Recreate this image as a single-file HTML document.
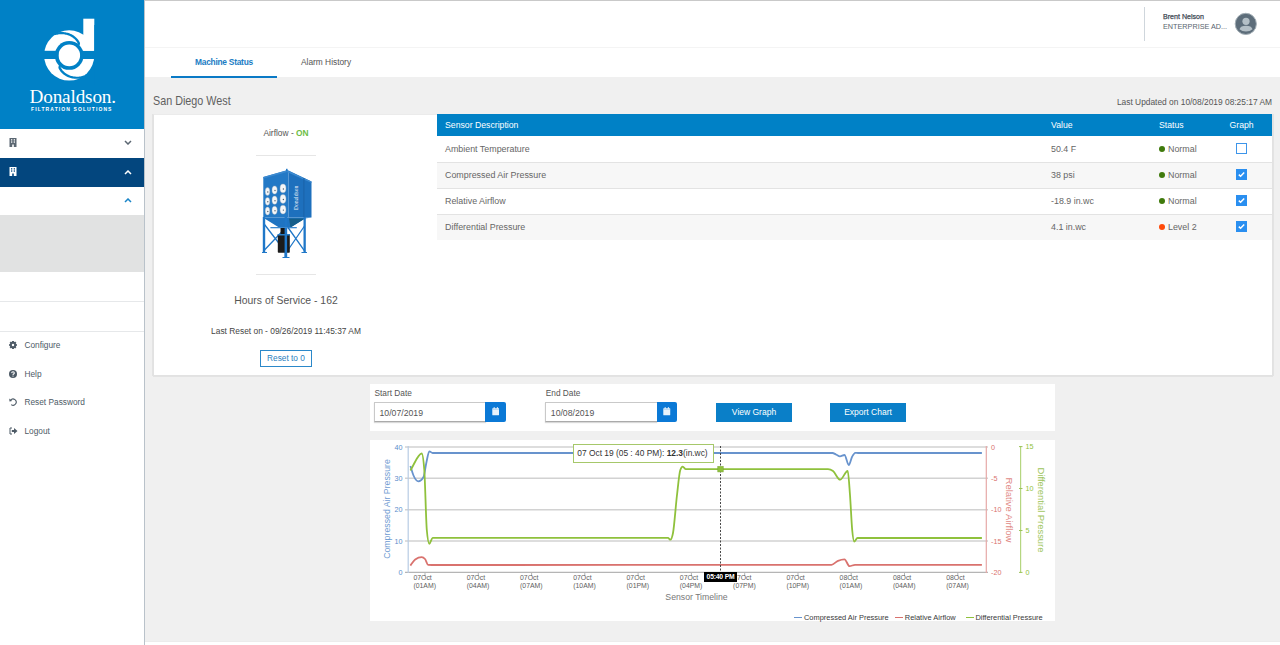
<!DOCTYPE html>
<html><head><meta charset="utf-8"><title>Machine Status</title>
<style>
*{margin:0;padding:0;box-sizing:border-box}
html,body{width:1280px;height:645px;overflow:hidden;background:#f0f0f0;font-family:"Liberation Sans",sans-serif}
.a{position:absolute}
.t{font-family:"Liberation Sans",sans-serif}
.c{font-family:"Liberation Sans",sans-serif}
</style></head><body>
<div class="a t" style="left:153px;top:93.5px;font-size:12.2px;color:#5f5f5f;line-height:14px;transform:scaleX(0.885);transform-origin:0 0;white-space:nowrap">San Diego West</div>
<div class="a t" style="right:8px;top:97px;font-size:8.4px;color:#555;line-height:10px;white-space:nowrap;text-align:right">Last Updated on 10/08/2019 08:25:17 AM</div>
<div class="a" style="left:153px;top:114px;width:1120px;height:262px;background:#fff;border:1px solid #e2e2e2;border-top-color:#ebebeb;box-shadow:0 0.6px 0.6px rgba(0,0,0,0.05),-0.6px 0 0.6px rgba(0,0,0,0.05),0.6px 0 0.6px rgba(0,0,0,0.05)"></div>
<div class="a t" style="left:186px;top:128px;width:200px;text-align:center;font-size:8.4px;color:#555;line-height:10px">Airflow - <b style="color:#6cbd45">ON</b></div>
<div class="a" style="left:256px;top:155px;width:60px;height:1px;background:#e6e6e6"></div>
<div class="a" style="left:256px;top:274px;width:60px;height:1px;background:#e6e6e6"></div>
<svg class="a" style="left:255px;top:165px" width="62" height="98" viewBox="255 165 62 98">
<path d="M288.5 170.6 L311.5 181.4 L311.5 217.5 L288.5 217.5 Z" fill="#1e70bd"/>
<path d="M263.3 177 L287 170.3 L288.5 170.6 L288.5 217.5 L263.3 217.5 Z" fill="#2379c6"/>
<path d="M263.3 177 L287 170.3 L311.5 181.4 L311.5 183 L287 172 L263.3 178.6 Z" fill="#3d8ad0"/>
<rect x="286" y="168.8" width="1.6" height="2.5" fill="#2379c6"/>
<rect x="303.3" y="178" width="1.2" height="39" fill="#1a64ab"/>
<path d="M263.3 217.5 L311.5 217.5 L305 218.5 L290.5 227.5 L279 227.5 L264.5 218.5 Z" fill="#1f74c2"/>
<path d="M289 218.5 L305 218.5 L290.5 227.5 Z" fill="#155e8a"/>
<rect x="262.8" y="217" width="2.4" height="35.5" fill="#1f77c8"/>
<rect x="284.6" y="217" width="2.5" height="40.5" fill="#1f77c8"/>
<rect x="303.5" y="217" width="2.3" height="35.5" fill="#1f77c8"/>
<path d="M262 252.5 H267 M282.5 257.5 H289.5 M301.5 252.5 H307" stroke="#1f77c8" stroke-width="1.2"/>
<rect x="270.4" y="227" width="26.4" height="1.3" fill="#3d8ad0"/>
<path d="M264.5 224.5 L284.5 250.5 M284.5 229 L264 250.5 M288 227.5 L304.5 250.8 M304.5 226 L288 250" stroke="#1f77c8" stroke-width="1.3"/>
<rect x="280.5" y="228" width="4.5" height="7" fill="#151515"/>
<rect x="277.8" y="234.5" width="12" height="18.3" rx="0.8" fill="#1b1b1b"/>
<rect x="277.5" y="234" width="12.5" height="1.5" fill="#2a7fc9"/>
<rect x="284.6" y="228" width="2.5" height="30" fill="#1f77c8"/>
<g fill="#f4f6f8" stroke="#9aa7b3" stroke-width="0.4">
<ellipse cx="267.5" cy="191.5" rx="2.3" ry="3.9"/><ellipse cx="274.6" cy="190" rx="2.6" ry="4.1"/><ellipse cx="283" cy="188.4" rx="3" ry="4.4"/>
<ellipse cx="267.5" cy="201.3" rx="2.3" ry="3.9"/><ellipse cx="274.6" cy="200.2" rx="2.6" ry="4.1"/><ellipse cx="283" cy="199" rx="3" ry="4.4"/>
<ellipse cx="267.5" cy="211" rx="2.3" ry="3.9"/><ellipse cx="274.6" cy="210.3" rx="2.6" ry="4.1"/><ellipse cx="283" cy="209.6" rx="3" ry="4.4"/>
</g>
<g fill="#55606a">
<circle cx="267.8" cy="192" r="0.7"/><circle cx="275" cy="190.5" r="0.7"/><circle cx="283.4" cy="189" r="0.7"/>
<circle cx="267.8" cy="201.8" r="0.7"/><circle cx="275" cy="200.7" r="0.7"/><circle cx="283.4" cy="199.5" r="0.7"/>
<circle cx="267.8" cy="211.5" r="0.7"/><circle cx="275" cy="210.8" r="0.7"/><circle cx="283.4" cy="210.1" r="0.7"/>
</g>
<text x="0" y="0" transform="translate(297.6 210) rotate(-90)" font-family="Liberation Serif" font-size="5.6" fill="#e8f0f8">Donaldson</text>
</svg>
<div class="a t" style="left:186px;top:294px;width:200px;text-align:center;font-size:10.4px;color:#555;line-height:13px">Hours of Service - 162</div>
<div class="a t" style="left:136px;top:326.3px;width:300px;text-align:center;font-size:8.4px;color:#444;line-height:10px">Last Reset on - 09/26/2019 11:45:37 AM</div>
<div class="a t" style="left:260px;top:350px;width:52px;height:17px;border:1px solid #2b88c9;text-align:center;font-size:8.3px;color:#2b7fc0;line-height:15px">Reset to 0</div>
<div class="a" style="left:437px;top:114px;width:835px;height:22px;background:#0081c6"></div>
<div class="a t" style="left:445px;top:120px;font-size:8.7px;color:#fff;line-height:10px;white-space:nowrap">Sensor Description</div>
<div class="a t" style="left:1051px;top:120px;font-size:8.7px;color:#fff;line-height:10px;white-space:nowrap">Value</div>
<div class="a t" style="left:1159px;top:120px;font-size:8.7px;color:#fff;line-height:10px;white-space:nowrap">Status</div>
<div class="a t" style="left:1229.5px;top:120px;font-size:8.7px;color:#fff;line-height:10px;white-space:nowrap">Graph</div>
<div class="a" style="left:437px;top:136px;width:835px;height:26px;background:#fff"></div>
<div class="a t" style="left:445px;top:143.5px;font-size:8.9px;color:#666;line-height:10px;white-space:nowrap">Ambient Temperature</div>
<div class="a t" style="left:1051px;top:143.5px;font-size:8.9px;color:#666;line-height:10px;white-space:nowrap">50.4 F</div>
<div class="a" style="left:1158.5px;top:146px;width:6px;height:6px;border-radius:50%;background:#3f7a0c"></div>
<div class="a t" style="left:1168px;top:143.5px;font-size:8.9px;color:#666;line-height:10px;white-space:nowrap">Normal</div>
<div class="a" style="left:1236px;top:143px;width:11px;height:11px;border:1px solid #3d95ea;background:#fff"></div>
<div class="a" style="left:437px;top:162px;width:835px;height:26px;background:#f7f7f7"></div>
<div class="a" style="left:437px;top:162px;width:835px;height:1px;background:#e3e3e3"></div>
<div class="a t" style="left:445px;top:169.5px;font-size:8.9px;color:#666;line-height:10px;white-space:nowrap">Compressed Air Pressure</div>
<div class="a t" style="left:1051px;top:169.5px;font-size:8.9px;color:#666;line-height:10px;white-space:nowrap">38 psi</div>
<div class="a" style="left:1158.5px;top:172px;width:6px;height:6px;border-radius:50%;background:#3f7a0c"></div>
<div class="a t" style="left:1168px;top:169.5px;font-size:8.9px;color:#666;line-height:10px;white-space:nowrap">Normal</div>
<svg class="a" style="left:1236px;top:169px" width="11" height="11" viewBox="0 0 11 11"><rect x="0" y="0" width="11" height="11" fill="#2a8ff0"/><path d="M2.8 5.6 L4.6 7.3 L8.2 3.6" stroke="#fff" stroke-width="1.5" fill="none"/></svg>
<div class="a" style="left:437px;top:188px;width:835px;height:26px;background:#fff"></div>
<div class="a" style="left:437px;top:188px;width:835px;height:1px;background:#e3e3e3"></div>
<div class="a t" style="left:445px;top:195.5px;font-size:8.9px;color:#666;line-height:10px;white-space:nowrap">Relative Airflow</div>
<div class="a t" style="left:1051px;top:195.5px;font-size:8.9px;color:#666;line-height:10px;white-space:nowrap">-18.9 in.wc</div>
<div class="a" style="left:1158.5px;top:198px;width:6px;height:6px;border-radius:50%;background:#3f7a0c"></div>
<div class="a t" style="left:1168px;top:195.5px;font-size:8.9px;color:#666;line-height:10px;white-space:nowrap">Normal</div>
<svg class="a" style="left:1236px;top:195px" width="11" height="11" viewBox="0 0 11 11"><rect x="0" y="0" width="11" height="11" fill="#2a8ff0"/><path d="M2.8 5.6 L4.6 7.3 L8.2 3.6" stroke="#fff" stroke-width="1.5" fill="none"/></svg>
<div class="a" style="left:437px;top:214px;width:835px;height:26px;background:#f7f7f7"></div>
<div class="a" style="left:437px;top:214px;width:835px;height:1px;background:#e3e3e3"></div>
<div class="a t" style="left:445px;top:221.5px;font-size:8.9px;color:#666;line-height:10px;white-space:nowrap">Differential Pressure</div>
<div class="a t" style="left:1051px;top:221.5px;font-size:8.9px;color:#666;line-height:10px;white-space:nowrap">4.1 in.wc</div>
<div class="a" style="left:1158.5px;top:224px;width:6px;height:6px;border-radius:50%;background:#ff4a0a"></div>
<div class="a t" style="left:1168px;top:221.5px;font-size:8.9px;color:#666;line-height:10px;white-space:nowrap">Level 2</div>
<svg class="a" style="left:1236px;top:221px" width="11" height="11" viewBox="0 0 11 11"><rect x="0" y="0" width="11" height="11" fill="#2a8ff0"/><path d="M2.8 5.6 L4.6 7.3 L8.2 3.6" stroke="#fff" stroke-width="1.5" fill="none"/></svg>
<div class="a" style="left:370px;top:384px;width:685px;height:47px;background:#fff"></div>
<div class="a t" style="left:374.5px;top:387.5px;font-size:8.3px;color:#555;line-height:10px;white-space:nowrap">Start Date</div>
<div class="a" style="left:373.7px;top:402px;width:112px;height:20px;border:1px solid #c9c9c9;border-right:0;border-bottom-color:#aaa;box-shadow:0 1px 1px rgba(0,0,0,0.15);background:#fff"></div>
<div class="a t" style="left:379.5px;top:407.5px;font-size:8.7px;color:#555;line-height:10px;white-space:nowrap">10/07/2019</div>
<div class="a" style="left:485.2px;top:402px;width:20.5px;height:20px;background:#0b79d6;border-radius:0 2px 2px 0"></div>
<svg class="a" style="left:491.8px;top:407.3px" width="7.5" height="8.5" viewBox="0 0 8 9"><rect x="0.3" y="1.2" width="7.4" height="7.5" rx="0.6" fill="#eaf3fb"/><rect x="1.8" y="0" width="1" height="2" fill="#eaf3fb"/><rect x="5.2" y="0" width="1" height="2" fill="#eaf3fb"/><rect x="0.3" y="2.6" width="7.4" height="0.5" fill="#8cc0ea"/></svg>
<div class="a t" style="left:545.8px;top:387.5px;font-size:8.3px;color:#555;line-height:10px;white-space:nowrap">End Date</div>
<div class="a" style="left:545.0px;top:402px;width:112px;height:20px;border:1px solid #c9c9c9;border-right:0;border-bottom-color:#aaa;box-shadow:0 1px 1px rgba(0,0,0,0.15);background:#fff"></div>
<div class="a t" style="left:550.8px;top:407.5px;font-size:8.7px;color:#555;line-height:10px;white-space:nowrap">10/08/2019</div>
<div class="a" style="left:656.5px;top:402px;width:20.5px;height:20px;background:#0b79d6;border-radius:0 2px 2px 0"></div>
<svg class="a" style="left:663.1px;top:407.3px" width="7.5" height="8.5" viewBox="0 0 8 9"><rect x="0.3" y="1.2" width="7.4" height="7.5" rx="0.6" fill="#eaf3fb"/><rect x="1.8" y="0" width="1" height="2" fill="#eaf3fb"/><rect x="5.2" y="0" width="1" height="2" fill="#eaf3fb"/><rect x="0.3" y="2.6" width="7.4" height="0.5" fill="#8cc0ea"/></svg>
<div class="a t" style="left:716px;top:403px;width:76px;height:18.5px;background:#0a7fc8;color:#fff;text-align:center;font-size:8.5px;line-height:18px;white-space:nowrap">View Graph</div>
<div class="a t" style="left:830px;top:403px;width:76px;height:18.5px;background:#0a7fc8;color:#fff;text-align:center;font-size:8.5px;line-height:18px;white-space:nowrap">Export Chart</div>
<div class="a" style="left:370px;top:440px;width:685px;height:181px;background:#fff"></div>
<svg class="a" style="left:370px;top:440px" width="685" height="181" viewBox="370 440 685 181">
<line x1="405" y1="447.0" x2="988" y2="447.0" stroke="#d2d2d2" stroke-width="1.4"/>
<line x1="405" y1="478.3" x2="988" y2="478.3" stroke="#d2d2d2" stroke-width="1.4"/>
<line x1="405" y1="509.8" x2="988" y2="509.8" stroke="#d2d2d2" stroke-width="1.4"/>
<line x1="405" y1="541.0" x2="988" y2="541.0" stroke="#d2d2d2" stroke-width="1.4"/>
<line x1="405" y1="572.4" x2="988" y2="572.4" stroke="#b5b5b5" stroke-width="1.4"/>
<line x1="408.2" y1="446" x2="408.2" y2="573" stroke="#b8cce4" stroke-width="1.2"/>
<line x1="986.3" y1="446" x2="986.3" y2="573" stroke="#e6a9a7" stroke-width="1.2"/>
<line x1="1020.6" y1="446" x2="1020.6" y2="573" stroke="#b5d680" stroke-width="1.2"/>
<line x1="1019" y1="446.6" x2="1022.5" y2="446.6" stroke="#9cc45a" stroke-width="1"/>
<line x1="1019" y1="488.5" x2="1022.5" y2="488.5" stroke="#9cc45a" stroke-width="1"/>
<line x1="1019" y1="530.5" x2="1022.5" y2="530.5" stroke="#9cc45a" stroke-width="1"/>
<line x1="1019" y1="572.4" x2="1022.5" y2="572.4" stroke="#9cc45a" stroke-width="1"/>
<line x1="425.0" y1="572.4" x2="425.0" y2="576" stroke="#b5b5b5" stroke-width="1"/>
<line x1="478.3" y1="572.4" x2="478.3" y2="576" stroke="#b5b5b5" stroke-width="1"/>
<line x1="531.6" y1="572.4" x2="531.6" y2="576" stroke="#b5b5b5" stroke-width="1"/>
<line x1="584.8" y1="572.4" x2="584.8" y2="576" stroke="#b5b5b5" stroke-width="1"/>
<line x1="638.1" y1="572.4" x2="638.1" y2="576" stroke="#b5b5b5" stroke-width="1"/>
<line x1="691.4" y1="572.4" x2="691.4" y2="576" stroke="#b5b5b5" stroke-width="1"/>
<line x1="744.7" y1="572.4" x2="744.7" y2="576" stroke="#b5b5b5" stroke-width="1"/>
<line x1="798.0" y1="572.4" x2="798.0" y2="576" stroke="#b5b5b5" stroke-width="1"/>
<line x1="851.2" y1="572.4" x2="851.2" y2="576" stroke="#b5b5b5" stroke-width="1"/>
<line x1="904.5" y1="572.4" x2="904.5" y2="576" stroke="#b5b5b5" stroke-width="1"/>
<line x1="957.8" y1="572.4" x2="957.8" y2="576" stroke="#b5b5b5" stroke-width="1"/>
<path d="M410.40 565.60 C412.00 563.57 413.60 560.63 415.20 559.50 C417.37 557.97 419.53 557.20 421.70 557.20 C422.80 557.20 423.90 557.80 425.00 559.00 C426.07 560.16 427.13 564.84 428.20 564.90 C429.47 564.97 430.73 565.00 432.00 565.00 C565.17 565.00 698.33 564.93 831.50 564.80 C833.67 564.80 835.83 561.72 838.00 560.80 C840.17 559.88 842.33 559.30 844.50 559.30 C846.17 559.30 847.83 566.20 849.50 566.20 C851.33 566.20 853.17 564.80 855.00 564.80 C897.30 564.80 939.60 564.80 981.90 564.80" stroke="#d9726e" stroke-width="1.8" fill="none" stroke-linejoin="round"/>
<path d="M410.40 466.00 C411.43 469.17 412.47 473.10 413.50 475.50 C415.17 479.37 416.83 481.30 418.50 481.30 C420.17 481.30 421.83 479.87 423.50 477.00 C424.50 475.28 425.50 466.39 426.50 462.00 C427.43 457.90 428.37 451.30 429.30 451.30 C430.40 451.30 431.50 453.00 432.60 453.00 C433.73 453.00 434.87 453.00 436.00 453.00 C568.17 453.00 700.33 453.00 832.50 453.00 C833.67 453.00 834.83 453.99 836.00 454.50 C837.33 455.08 838.67 456.30 840.00 456.30 C841.50 456.30 843.00 455.00 844.50 455.00 C845.93 455.00 847.37 465.00 848.80 465.00 C849.87 465.00 850.93 459.02 852.00 457.00 C853.10 454.91 854.20 452.80 855.30 452.80 C856.20 452.80 857.10 453.00 858.00 453.00 C899.30 453.00 940.60 453.00 981.90 453.00" stroke="#6893cd" stroke-width="1.8" fill="none" stroke-linejoin="round"/>
<path d="M410.40 470.40 C414.17 464.77 417.93 453.50 421.70 453.50 C422.57 453.50 423.43 459.00 424.30 470.00 C425.13 480.58 425.97 520.80 426.80 530.00 C427.63 539.20 428.47 543.80 429.30 543.80 C430.40 543.80 431.50 537.90 432.60 537.90 C433.73 537.90 434.87 537.90 436.00 537.90 C513.33 537.90 590.67 537.90 668.00 537.90 C668.80 537.90 669.60 539.70 670.40 539.70 C671.27 539.70 672.13 537.47 673.00 533.00 C674.33 526.13 675.67 506.26 677.00 495.00 C678.10 485.71 679.20 473.12 680.30 470.00 C681.10 467.73 681.90 466.60 682.70 466.60 C683.73 466.60 684.77 469.20 685.80 469.20 C686.87 469.20 687.93 469.20 689.00 469.20 C735.33 469.20 781.67 469.20 828.00 469.20 C829.67 469.20 831.33 469.80 833.00 471.00 C835.37 472.70 837.73 479.70 840.10 479.70 C842.63 479.70 845.17 471.00 847.70 471.00 C848.47 471.00 849.23 484.85 850.00 495.00 C850.73 504.70 851.47 522.24 852.20 530.00 C852.87 537.06 853.53 541.50 854.20 541.50 C855.30 541.50 856.40 538.00 857.50 538.00 C858.67 538.00 859.83 538.00 861.00 538.00 C901.30 538.00 941.60 538.00 981.90 538.00" stroke="#8fc13c" stroke-width="1.8" fill="none" stroke-linejoin="round"/>
<line x1="720.5" y1="446" x2="720.5" y2="572" stroke="#333" stroke-width="0.9" stroke-dasharray="2,1.5"/>
<rect x="717.8" y="466.5" width="5.4" height="5.4" fill="#8fc13c" stroke="#7ba832" stroke-width="0.6"/>
</svg>
<div class="a c" style="left:372px;top:442.5px;width:30.5px;text-align:right;font-size:7.2px;color:#5b8ccb;line-height:9px">40</div>
<div class="a c" style="left:372px;top:473.8px;width:30.5px;text-align:right;font-size:7.2px;color:#5b8ccb;line-height:9px">30</div>
<div class="a c" style="left:372px;top:505.3px;width:30.5px;text-align:right;font-size:7.2px;color:#5b8ccb;line-height:9px">20</div>
<div class="a c" style="left:372px;top:536.5px;width:30.5px;text-align:right;font-size:7.2px;color:#5b8ccb;line-height:9px">10</div>
<div class="a c" style="left:372px;top:567.9px;width:30.5px;text-align:right;font-size:7.2px;color:#5b8ccb;line-height:9px">0</div>
<div class="a c" style="left:991px;top:442.5px;font-size:7.2px;color:#d9726e;line-height:9px;white-space:nowrap">0</div>
<div class="a c" style="left:991px;top:473.8px;font-size:7.2px;color:#d9726e;line-height:9px;white-space:nowrap">-5</div>
<div class="a c" style="left:991px;top:505.3px;font-size:7.2px;color:#d9726e;line-height:9px;white-space:nowrap">-10</div>
<div class="a c" style="left:991px;top:536.5px;font-size:7.2px;color:#d9726e;line-height:9px;white-space:nowrap">-15</div>
<div class="a c" style="left:991px;top:567.9px;font-size:7.2px;color:#d9726e;line-height:9px;white-space:nowrap">-20</div>
<div class="a c" style="left:1025.5px;top:442.1px;font-size:7.2px;color:#8fc13c;line-height:9px;white-space:nowrap">15</div>
<div class="a c" style="left:1025.5px;top:484.0px;font-size:7.2px;color:#8fc13c;line-height:9px;white-space:nowrap">10</div>
<div class="a c" style="left:1025.5px;top:526.0px;font-size:7.2px;color:#8fc13c;line-height:9px;white-space:nowrap">5</div>
<div class="a c" style="left:1025.5px;top:567.9px;font-size:7.2px;color:#8fc13c;line-height:9px;white-space:nowrap">0</div>
<div class="a c" style="left:336.5px;top:504px;width:100px;height:10px;text-align:center;font-size:8.75px;color:#6f9bd2;line-height:10px;white-space:nowrap;transform:rotate(-90deg)">Compressed Air Pressure</div>
<div class="a c" style="left:969px;top:504.5px;width:80px;height:10px;text-align:center;font-size:9.5px;color:#df8a86;line-height:10px;white-space:nowrap;transform:rotate(90deg)">Relative Airflow</div>
<div class="a c" style="left:990.5px;top:504.5px;width:100px;height:10px;text-align:center;font-size:9.4px;color:#9cc45a;line-height:10px;white-space:nowrap;transform:rotate(90deg)">Differential Pressure</div>
<div class="a c" style="left:413.4px;top:574px;width:40px;text-align:left;font-size:6.9px;color:#5e5e5e;line-height:7.6px;white-space:nowrap">07Oct<br>(01AM)</div>
<div class="a c" style="left:466.7px;top:574px;width:40px;text-align:left;font-size:6.9px;color:#5e5e5e;line-height:7.6px;white-space:nowrap">07Oct<br>(04AM)</div>
<div class="a c" style="left:520.0px;top:574px;width:40px;text-align:left;font-size:6.9px;color:#5e5e5e;line-height:7.6px;white-space:nowrap">07Oct<br>(07AM)</div>
<div class="a c" style="left:573.2px;top:574px;width:40px;text-align:left;font-size:6.9px;color:#5e5e5e;line-height:7.6px;white-space:nowrap">07Oct<br>(10AM)</div>
<div class="a c" style="left:626.5px;top:574px;width:40px;text-align:left;font-size:6.9px;color:#5e5e5e;line-height:7.6px;white-space:nowrap">07Oct<br>(01PM)</div>
<div class="a c" style="left:679.8px;top:574px;width:40px;text-align:left;font-size:6.9px;color:#5e5e5e;line-height:7.6px;white-space:nowrap">07Oct<br>(04PM)</div>
<div class="a c" style="left:733.1px;top:574px;width:40px;text-align:left;font-size:6.9px;color:#5e5e5e;line-height:7.6px;white-space:nowrap">07Oct<br>(07PM)</div>
<div class="a c" style="left:786.4px;top:574px;width:40px;text-align:left;font-size:6.9px;color:#5e5e5e;line-height:7.6px;white-space:nowrap">07Oct<br>(10PM)</div>
<div class="a c" style="left:839.6px;top:574px;width:40px;text-align:left;font-size:6.9px;color:#5e5e5e;line-height:7.6px;white-space:nowrap">08Oct<br>(01AM)</div>
<div class="a c" style="left:892.9px;top:574px;width:40px;text-align:left;font-size:6.9px;color:#5e5e5e;line-height:7.6px;white-space:nowrap">08Oct<br>(04AM)</div>
<div class="a c" style="left:946.2px;top:574px;width:40px;text-align:left;font-size:6.9px;color:#5e5e5e;line-height:7.6px;white-space:nowrap">08Oct<br>(07AM)</div>
<div class="a c" style="left:640px;top:592px;width:113px;text-align:center;font-size:8.7px;color:#777;line-height:10px;white-space:nowrap">Sensor Timeline</div>
<div class="a c" style="left:704px;top:572px;width:33px;height:9.6px;background:#000;color:#fff;text-align:center;font-size:6.8px;line-height:9.6px;white-space:nowrap;font-weight:bold;letter-spacing:-0.2px">05:40 PM</div>
<div class="a c" style="left:573.3px;top:444.3px;width:140.6px;height:18.5px;background:#fff;border:1px solid #a6c86a;font-size:8.4px;color:#333;line-height:16.5px;white-space:nowrap;padding-left:3px">07 Oct 19 (05 : 40 PM): <b>12.3</b>(in.wc)</div>
<div class="a" style="left:794.2px;top:617px;width:8px;height:1.3px;background:#6893cd"></div>
<div class="a c" style="left:804.0px;top:612.6px;font-size:7.45px;color:#3a3a3a;line-height:10px;white-space:nowrap">Compressed Air Pressure</div>
<div class="a" style="left:895px;top:617px;width:8px;height:1.3px;background:#d9726e"></div>
<div class="a c" style="left:904.8px;top:612.6px;font-size:7.45px;color:#3a3a3a;line-height:10px;white-space:nowrap">Relative Airflow</div>
<div class="a" style="left:965.6px;top:617px;width:8px;height:1.3px;background:#8fc13c"></div>
<div class="a c" style="left:975.4px;top:612.6px;font-size:7.45px;color:#3a3a3a;line-height:10px;white-space:nowrap">Differential Pressure</div>
<div class="a" style="left:0;top:0;width:1280px;height:1px;background:#c9c9c9"></div>
<div class="a" style="left:145px;top:1px;width:1135px;height:76px;background:#fff"></div>
<div class="a" style="left:145px;top:46.5px;width:1135px;height:1.5px;background:#f4f4f4"></div>
<div class="a" style="left:145px;top:641px;width:1135px;height:4px;background:#fff;border-top:1px solid #ececec"></div>
<div class="a" style="left:1144px;top:7px;width:1px;height:34px;background:#cfd6dc"></div>
<div class="a t" style="left:1163px;top:12.5px;font-size:7.1px;color:#3f4a55;line-height:9px;white-space:nowrap;-webkit-text-stroke:0.25px #3f4a55">Brent Nelson</div>
<div class="a t" style="left:1163px;top:22px;font-size:7.25px;color:#59656f;line-height:9px;white-space:nowrap">ENTERPRISE AD...</div>
<svg class="a" style="left:1234px;top:12px" width="24" height="24" viewBox="0 0 24 24">
<circle cx="11.8" cy="11.9" r="10.6" fill="#5d6d7a" stroke="#a4afb6" stroke-width="1"/>
<circle cx="12" cy="9.3" r="3.6" fill="#b4bfc6"/>
<path d="M5.5 17.2 Q6.5 13.8 12 13.8 Q17.5 13.8 18.5 17.2 Q16 19.5 12 19.5 Q8 19.5 5.5 17.2Z" fill="#b4bfc6"/>
</svg>
<div class="a t" style="left:195px;top:57px;font-size:8.4px;font-weight:bold;color:#1b7cc4;line-height:10px;white-space:nowrap;letter-spacing:-0.25px">Machine Status</div>
<div class="a t" style="left:301px;top:57px;font-size:8.35px;color:#555;line-height:10px;white-space:nowrap">Alarm History</div>
<div class="a" style="left:171px;top:76px;width:106px;height:2px;background:#0a7ac6"></div>
<div class="a" style="left:0;top:0;width:144px;height:129px;background:#0081c6"></div>
<svg class="a" style="left:0;top:0" width="144" height="129" viewBox="0 0 144 129">
  <circle cx="69.2" cy="55.45" r="25.1" fill="#fff"/>
  <circle cx="69.2" cy="55.45" r="14.4" fill="#0081c6"/>
  <circle cx="69.3" cy="55.3" r="10.85" fill="#fff"/>
  <rect x="40" y="50.8" width="18.5" height="8.2" fill="#0081c6"/>
  <rect x="80.2" y="50.8" width="20" height="8.2" fill="#0081c6"/>
  <rect x="83.3" y="18.7" width="11" height="32.1" fill="#fff"/>
  <rect x="94.3" y="25" width="6" height="60" fill="#0081c6"/>
  <path d="M79.74 44.91 L79.91 43.96 L80.02 42.98 L79.75 42.39 L79.45 41.80 L79.12 41.22 L78.76 40.65 L78.37 40.08 L77.96 39.52 L77.52 38.97 L77.04 38.43 L76.55 37.91 L76.02 37.40 L75.47 36.91 L74.89 36.43 L74.28 35.97 L73.65 35.53 L73.00 35.11 L72.32 34.72 L71.61 34.34 L70.89 33.99 L70.14 33.67 L69.37 33.37 L68.59 33.10 L67.78 32.85 L66.95 32.64 L66.11 32.46 L65.25 32.31 L64.38 32.19 L63.50 32.10 L62.60 32.05 L61.69 32.03 L60.78 32.05 L59.85 32.10 L58.92 32.19 L57.98 32.32 L57.04 32.49 L56.10 32.69 L55.15 32.93 L54.21 33.21 L53.27 33.53 L54.56 35.31 L55.45 35.04 L56.33 34.82 L57.21 34.63 L58.09 34.47 L58.97 34.36 L59.84 34.27 L60.70 34.23 L61.55 34.21 L62.40 34.23 L63.23 34.29 L64.05 34.37 L64.86 34.49 L65.65 34.64 L66.43 34.81 L67.19 35.02 L67.93 35.25 L68.65 35.51 L69.35 35.79 L70.04 36.10 L70.70 36.43 L71.33 36.79 L71.95 37.16 L72.54 37.56 L73.11 37.97 L73.65 38.40 L74.16 38.85 L74.66 39.31 L75.12 39.79 L75.56 40.27 L75.97 40.77 L76.35 41.28 L76.71 41.80 L77.03 42.32 L77.34 42.85 L77.61 43.38 L77.86 43.92 L78.07 44.46 L78.27 45.00 L78.78 45.16 L79.31 45.34Z" fill="#0081c6"/>
  <path d="M58.66 65.99 L58.49 66.94 L58.38 67.92 L58.65 68.51 L58.95 69.10 L59.28 69.68 L59.64 70.25 L60.03 70.82 L60.44 71.38 L60.88 71.93 L61.36 72.47 L61.85 72.99 L62.38 73.50 L62.93 73.99 L63.51 74.47 L64.12 74.93 L64.75 75.37 L65.40 75.79 L66.08 76.18 L66.79 76.56 L67.51 76.91 L68.26 77.23 L69.03 77.53 L69.81 77.80 L70.62 78.05 L71.45 78.26 L72.29 78.44 L73.15 78.59 L74.02 78.71 L74.90 78.80 L75.80 78.85 L76.71 78.87 L77.62 78.85 L78.55 78.80 L79.48 78.71 L80.42 78.58 L81.36 78.41 L82.30 78.21 L83.25 77.97 L84.19 77.69 L85.13 77.37 L83.84 75.59 L82.95 75.86 L82.07 76.08 L81.19 76.27 L80.31 76.43 L79.43 76.54 L78.56 76.63 L77.70 76.67 L76.85 76.69 L76.00 76.67 L75.17 76.61 L74.35 76.53 L73.54 76.41 L72.75 76.26 L71.97 76.09 L71.21 75.88 L70.47 75.65 L69.75 75.39 L69.05 75.11 L68.36 74.80 L67.70 74.47 L67.07 74.11 L66.45 73.74 L65.86 73.34 L65.29 72.93 L64.75 72.50 L64.24 72.05 L63.74 71.59 L63.28 71.11 L62.84 70.63 L62.43 70.13 L62.05 69.62 L61.69 69.10 L61.37 68.58 L61.06 68.05 L60.79 67.52 L60.54 66.98 L60.33 66.44 L60.13 65.90 L59.62 65.74 L59.09 65.56Z" fill="#0081c6"/>
</svg>
<div class="a" style="left:29.5px;top:85px;width:100px;text-align:left;font-family:'Liberation Serif',serif;font-size:19.2px;color:#fff;letter-spacing:-0.15px;line-height:24px">Donaldson.</div>
<div class="a" style="left:31px;top:106px;width:90px;font-family:'Liberation Sans',sans-serif;font-size:5px;font-weight:bold;color:#fff;letter-spacing:1.1px;line-height:6px;white-space:nowrap">FILTRATION SOLUTIONS</div>
<div class="a" style="left:0;top:129px;width:144px;height:516px;background:#fff"></div>
<svg class="a" style="left:9px;top:138px" width="8" height="9" viewBox="0 0 8 9">
<rect x="0.5" y="0" width="7" height="9" fill="#5b6772"/>
<rect x="2" y="1.2" width="1.3" height="1.3" fill="#fff"/><rect x="4.7" y="1.2" width="1.3" height="1.3" fill="#fff"/>
<rect x="2" y="3.4" width="1.3" height="1.3" fill="#fff"/><rect x="4.7" y="3.4" width="1.3" height="1.3" fill="#fff"/>
<rect x="3.2" y="6.5" width="1.6" height="2.5" fill="#fff"/>
</svg>
<svg class="a" style="left:124px;top:140px" width="8" height="5" viewBox="0 0 8 5"><path d="M1 1 L4 4 L7 1" stroke="#5b6772" stroke-width="1.5" fill="none"/></svg>
<div class="a" style="left:0;top:158px;width:144px;height:29px;background:#03467e"></div>
<svg class="a" style="left:9px;top:167px" width="8" height="9" viewBox="0 0 8 9">
<rect x="0.5" y="0" width="7" height="9" fill="#fff"/>
<rect x="2" y="1.2" width="1.3" height="1.3" fill="#03467e"/><rect x="4.7" y="1.2" width="1.3" height="1.3" fill="#03467e"/>
<rect x="2" y="3.4" width="1.3" height="1.3" fill="#03467e"/><rect x="4.7" y="3.4" width="1.3" height="1.3" fill="#03467e"/>
<rect x="3.2" y="6.5" width="1.6" height="2.5" fill="#03467e"/>
</svg>
<svg class="a" style="left:124px;top:169.5px" width="8" height="5" viewBox="0 0 8 5"><path d="M1 4 L4 1 L7 4" stroke="#fff" stroke-width="1.5" fill="none"/></svg>
<svg class="a" style="left:124px;top:197.5px" width="8" height="5" viewBox="0 0 8 5"><path d="M1 4 L4 1 L7 4" stroke="#1a85c8" stroke-width="1.5" fill="none"/></svg>
<div class="a" style="left:0;top:215px;width:144px;height:57px;background:#e1e2e2"></div>
<div class="a" style="left:0;top:301px;width:144px;height:1px;background:#e6e8ea"></div>
<div class="a" style="left:0;top:331px;width:144px;height:1px;background:#e6e8ea"></div>
<div class="a t" style="left:24.5px;top:339.7px;font-size:8.3px;color:#4d5a66;line-height:10px;white-space:nowrap">Configure</div>
<svg class="a" style="left:9px;top:340.7px" width="8" height="8" viewBox="0 0 8 8"><path d="M7.90 3.13 L7.90 4.87 L6.65 5.18 L6.71 5.04 L7.38 6.14 L6.14 7.38 L5.04 6.71 L5.18 6.65 L4.87 7.90 L3.13 7.90 L2.82 6.65 L2.96 6.71 L1.86 7.38 L0.62 6.14 L1.29 5.04 L1.35 5.18 L0.10 4.87 L0.10 3.13 L1.35 2.82 L1.29 2.96 L0.62 1.86 L1.86 0.62 L2.96 1.29 L2.82 1.35 L3.13 0.10 L4.87 0.10 L5.18 1.35 L5.04 1.29 L6.14 0.62 L7.38 1.86 L6.71 2.96 L6.65 2.82Z" fill="#4d5a66"/><circle cx="4" cy="4" r="1.2" fill="#fff"/></svg>
<div class="a t" style="left:24.5px;top:368.5px;font-size:8.3px;color:#4d5a66;line-height:10px;white-space:nowrap">Help</div>
<svg class="a" style="left:9px;top:369.5px" width="8" height="8" viewBox="0 0 8 8"><circle cx="4" cy="4" r="4" fill="#4d5a66"/><path d="M2.7 3.1 Q2.8 1.8 4 1.8 Q5.3 1.8 5.3 3 Q5.3 3.7 4.5 4.1 Q4 4.4 4 5" stroke="#fff" stroke-width="1.1" fill="none"/><rect x="3.45" y="5.6" width="1.1" height="1" fill="#fff"/></svg>
<div class="a t" style="left:24.5px;top:397.2px;font-size:8.3px;color:#4d5a66;line-height:10px;white-space:nowrap">Reset Password</div>
<svg class="a" style="left:9px;top:398.2px" width="8" height="8" viewBox="0 0 8 8"><path d="M1.6 2.2 A3.1 3.1 0 1 1 2.2 6.6" stroke="#4d5a66" stroke-width="1.1" fill="none"/><path d="M0.3 0.6 L0.5 3.4 L3.2 3.1 Z" fill="#4d5a66"/></svg>
<div class="a t" style="left:24.5px;top:425.7px;font-size:8.3px;color:#4d5a66;line-height:10px;white-space:nowrap">Logout</div>
<svg class="a" style="left:9px;top:426.7px" width="9" height="8" viewBox="0 0 9 8"><path d="M3 1 H1 V7 H3" stroke="#4d5a66" stroke-width="1" fill="none"/><path d="M2.8 3 H5 V1 L8.5 4 L5 7 V5 H2.8 Z" fill="#4d5a66"/></svg>
<div class="a" style="left:144px;top:0;width:1px;height:645px;background:#b9c2ca"></div>
</body></html>
